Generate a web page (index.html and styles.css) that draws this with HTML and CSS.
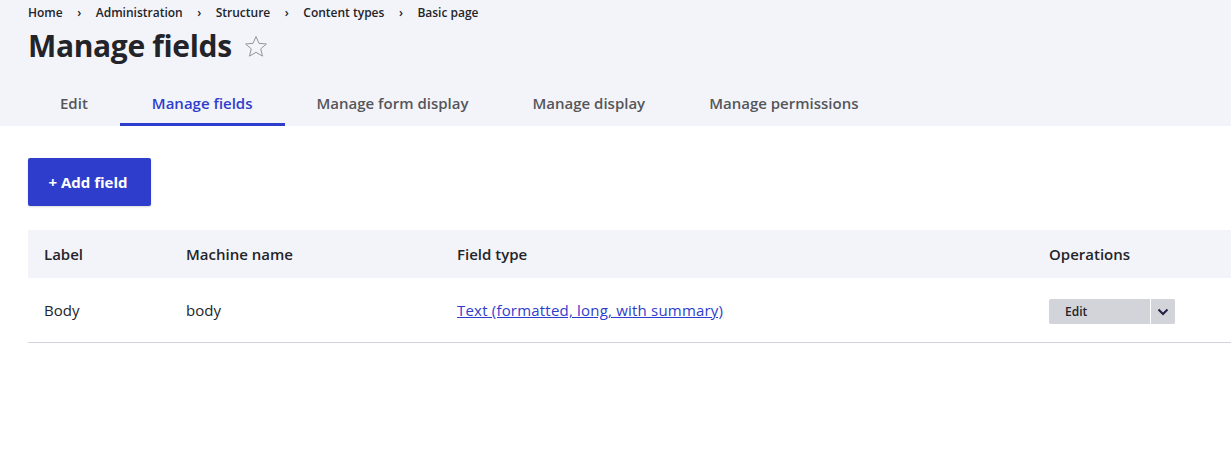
FILE: index.html
```html
<!DOCTYPE html>
<html lang="en">
<head>
<meta charset="utf-8">
<title>Manage fields</title>
<link rel="stylesheet" href="styles.css">
</head>
<body>
<header class="page-header">
  <nav class="breadcrumb">
    <a href="#">Home</a>
    <span class="sep">›</span>
    <a href="#">Administration</a>
    <span class="sep">›</span>
    <a href="#">Structure</a>
    <span class="sep">›</span>
    <a href="#">Content types</a>
    <span class="sep">›</span>
    <a href="#">Basic page</a>
  </nav>
  <div class="title-row">
    <h1 class="page-title">Manage fields</h1>
    <svg class="star" viewBox="0 0 24 24" width="26" height="26" aria-hidden="true">
      <path d="M12 2.3l2.75 6.3 6.85.6-5.2 4.5 1.6 6.75L12 16.9 6 20.45l1.6-6.75-5.2-4.5 6.850-.6z" fill="none" stroke="#8f929b" stroke-width="0.9" stroke-linejoin="miter"/>
    </svg>
  </div>
  <nav class="tabs">
    <a class="tab" href="#">Edit</a>
    <a class="tab active" href="#">Manage fields</a>
    <a class="tab" href="#">Manage form display</a>
    <a class="tab" href="#">Manage display</a>
    <a class="tab" href="#">Manage permissions</a>
  </nav>
</header>
<main class="content">
  <div class="actions">
    <a class="button-primary" href="#">+ Add field</a>
  </div>
  <table class="fields">
    <thead>
      <tr>
        <th class="col-label">Label</th>
        <th class="col-machine">Machine name</th>
        <th class="col-type">Field type</th>
        <th class="col-ops">Operations</th>
      </tr>
    </thead>
    <tbody>
      <tr>
        <td>Body</td>
        <td>body</td>
        <td><a class="type-link" href="#">Text (formatted, long, with summary)</a></td>
        <td>
          <div class="dropbutton">
            <a class="drop-main" href="#">Edit</a>
            <button class="drop-toggle" type="button" aria-label="List additional actions">
              <svg viewBox="0 0 12 8" width="12" height="8" aria-hidden="true"><path d="M1.5 1.5L6 6l4.5-4.5" fill="none" stroke="#1f2045" stroke-width="2"/></svg>
            </button>
          </div>
        </td>
      </tr>
    </tbody>
  </table>
</main>
</body>
</html>
```
FILE: styles.css
```css
* { box-sizing: border-box; }
html, body {
  margin: 0;
  padding: 0;
  background: #fff;
  color: #232429;
  font-family: "Open Sans", "Noto Sans", "Liberation Sans", sans-serif;
}
a { color: inherit; text-decoration: none; }

.page-header {
  background: #f3f4f9;
  padding: 3px 0 0 28px;
}
.breadcrumb {
  display: flex;
  align-items: center;
  height: 18px;
  font-size: 12px;
  font-weight: 600;
  color: #232429;
}
.breadcrumb .sep {
  margin: 0 14.5px;
  font-weight: 600;
}
.title-row {
  display: flex;
  align-items: center;
  height: 50px;
  gap: 11px;
}
.page-title {
  margin: 0;
  font-size: 30px;
  font-weight: 700;
  letter-spacing: -0.35px;
  line-height: 40px;
}
.star { margin-top: 1px; }
.tabs {
  display: flex;
  margin-top: 7px;
}
.tab {
  display: flex;
  align-items: center;
  height: 48px;
  padding: 4px 32px 0;
  font-size: 15px;
  font-weight: 600;
  color: #55565b;
  border-bottom: 3px solid transparent;
}
.tab.active {
  color: #2f3dcc;
  border-bottom-color: #2f3dcc;
}

.content {
  padding: 32px 0 0 28px;
}
.actions { display: flex; }
.button-primary {
  display: inline-flex;
  align-items: center;
  justify-content: center;
  height: 48px;
  width: 123px;
  padding-right: 3px;
  background: #2f3dcc;
  color: #fff;
  border-radius: 2px;
  font-size: 15px;
  font-weight: 700;
  box-shadow: 0 1px 2px rgba(0,0,0,0.15);
}
.fields {
  margin-top: 24px;
  width: 100%;
  border-collapse: collapse;
  font-size: 15px;
}
.fields th {
  background: #f3f4f9;
  height: 48px;
  text-align: left;
  font-weight: 600;
  padding: 0 16px;
}
.fields td {
  height: 64px;
  padding: 0 16px;
  border-bottom: 1px solid #d3d4d9;
}
.col-label { width: 142px; }
.col-machine { width: 271px; }
.col-type { width: 592px; }
.type-link {
  color: #2f3dcc;
  text-decoration: underline;
  letter-spacing: 0.2px;
}
.dropbutton {
  display: flex;
  width: 126px;
  height: 25px;
  margin-top: 4px;
  border-radius: 2px;
  overflow: hidden;
  background: #d3d4d9;
}
.drop-main {
  flex: 1;
  display: flex;
  align-items: center;
  padding-left: 16px;
  font-size: 12px;
  font-weight: 600;
  color: #232429;
  border-right: 1px solid #fff;
}
.drop-toggle {
  width: 24px;
  border: 0;
  padding: 0;
  background: #d3d4d9;
  display: flex;
  align-items: center;
  justify-content: center;
}
```
